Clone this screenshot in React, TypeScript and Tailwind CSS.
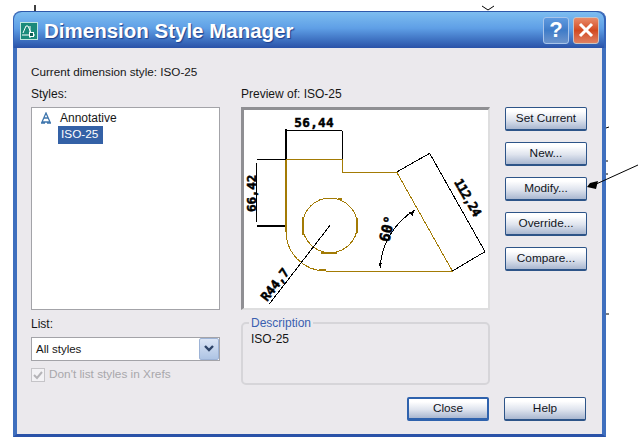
const uiFont = "font-['Liberation_Sans',Arial,sans-serif]";

const PushButton = ({ label, isDefault }: { label: string; isDefault?: boolean }) => (
  <button
    className={
      'h-[24px] w-[82px] shrink-0 rounded-[2px] bg-gradient-to-b from-white from-15% via-[#dfe4ee] via-55% to-[#a9b7d0] text-[11.8px] leading-none text-[#10141c] ' +
      (isDefault
        ? 'border-2 border-b-[3px] border-[#2f62ad]'
        : 'border border-b-2 border-[#2d5488]')
    }
  >
    {label}
  </button>
);

const TitleBar = () => (
  <div className="flex h-[37px] items-center rounded-t-[8px] border-t border-[#2e59ab] bg-gradient-to-b from-[#7dbdf0] via-[#5f9fe6] via-45% to-[#2a52a8] pl-[7px] pr-[7px] shadow-[inset_1px_0_0_#3564b8,inset_-2px_0_0_#3564b8]">
    <svg width="18" height="18" viewBox="0 0 18 18" className="mt-[2px] shrink-0">
      <rect width="18" height="18" fill="#1b8a7a" />
      <rect x="0.5" y="0.5" width="17" height="17" fill="none" stroke="#bfe8e0" />
      <path d="M3 11 L6 4 H8 L11 11 M2 13 H15 M10 4 V16" fill="none" stroke="#fff" />
      <rect x="9.5" y="10.5" width="4" height="4" fill="#0b5f54" stroke="#fff" />
    </svg>
    <span className="ml-[6px] mt-[2px] text-[20.5px] font-bold leading-none text-white [text-shadow:1px_1px_1px_#1c3f8c]">
      Dimension Style Manager
    </span>
    <div className="ml-auto flex gap-[4px]">
      <div className="flex h-[27px] w-[26px] items-center justify-center rounded-[3px] border border-[#a8c4ea] bg-gradient-to-b from-[#5f9ae0] via-[#3f7cc8] to-[#6c94cc] text-[22px] font-bold leading-none text-white">
        ?
      </div>
      <div className="flex h-[27px] w-[26px] items-center justify-center rounded-[3px] border border-[#c8c4c4] bg-gradient-to-b from-[#e98a68] via-[#d2491f] to-[#df8061]">
        <svg width="16" height="16" viewBox="0 0 16 16">
          <path d="M2 2 L14 14 M14 2 L2 14" stroke="#fff" strokeWidth="3" />
        </svg>
      </div>
    </div>
  </div>
);

const StylesList = () => (
  <div className="h-[203px] border border-[#a3a3a8] bg-white pl-[7px] pt-[2px]">
    <div className="flex h-[16px] items-center">
      <svg width="12" height="12" viewBox="0 0 12 12" className="ml-[1px] shrink-0">
        <path d="M6 1 L10 10 H2 Z M4 6 L8 6 M1 11 H5 M7 11 H11" fill="none" stroke="#3f76ad" strokeWidth="1.3" />
      </svg>
      <span className="ml-[8px] text-[12px] leading-none">Annotative</span>
    </div>
    <div className="ml-[19px] flex h-[18px] w-[45px] items-center bg-[#3461a6] pl-[3px] text-[11.8px] leading-none text-white">
      ISO-25
    </div>
  </div>
);

const PreviewDrawing = () => (
  <div className="h-[203px] w-[249px] border-[3px] border-b-[2px] border-r-[2px] border-[#8f8f93] border-b-[#dededf] border-r-[#dededf] bg-white">
    <svg width="244" height="198" viewBox="27 30 732 594" shapeRendering="crispEdges">
      <g fill="none" stroke="#a37b05" strokeWidth="3">
        <path d="M153 178 H322 V216 H485 L652 513 H272 A119 119 0 0 1 153 395 Z" />
        <path d="M153 178 V395" strokeWidth="6" />
        <circle cx="285" cy="376" r="82" />
        <path d="M252 510 H272 M310 298 H322 M367 355 V398 M205 350 V405 M258 458 H305" strokeWidth="6" />
      </g>
      <g fill="none" stroke="#000" strokeWidth="3">
        <path d="M153 92 H322 M322 92 V178 M65 178 H153 M65 190 V365" />
        <path d="M153 88 V178 M65 378 H150" strokeWidth="6" />
        <path d="M285 376 L103 612" />
        <path d="M485 216 L584 160 L750 455 L652 513" />
        <path d="M435 505 A217 217 0 0 1 540 330" />
      </g>
      <path d="M540 330 L522 338 L532 348 Z M435 505 L432 488 L440 490 Z" fill="#000" />
      <g fill="#000" stroke="#000" strokeWidth="1.5" className="font-['DejaVu_Sans_Mono',monospace] font-bold" fontSize="38">
        <text x="178" y="82" textLength="118">56,44</text>
        <text transform="translate(62 336) rotate(-90)" textLength="112">66,42</text>
        <text transform="translate(96 606) rotate(-52)" textLength="112">R44,7</text>
        <text transform="translate(462 428) rotate(-76)" fontSize="44" textLength="78" lengthAdjust="spacingAndGlyphs">60°</text>
        <text transform="translate(656 246) rotate(60)" textLength="124">112,24</text>
      </g>
    </svg>
  </div>
);

export default function App() {
  return (
    <div className={`relative h-[442px] w-[638px] overflow-hidden bg-white pl-[13px] pt-[11px] ${uiFont}`}>
      <div className="flex h-[426px] w-[593px] flex-col">
        <TitleBar />
        <div className="flex flex-1 flex-col border-x-[4px] border-b-[3px] border-l-[#3f6fbe] border-r-[#3f6fbe] border-b-[#2a52a8] bg-[#ebe9ed] pl-[14px] pr-[12px] pt-[17px] text-[#161616]">
          <div className="h-[14px] text-[11.7px] leading-[14px]">Current dimension style: ISO-25</div>
          <div className="mt-[2px] flex h-[304px]">
            <div className="flex w-[189px] flex-col pt-[6px]">
              <div className="mb-[6px] h-[14px] text-[12px] leading-[14px]">Styles:</div>
              <StylesList />
              <div className="mt-[7px] h-[14px] text-[12px] leading-[14px]">List:</div>
              <div className="mt-[6px] flex h-[24px] items-stretch border border-[#a3a3a8] bg-white">
                <span className="flex-1 pl-[4px] text-[11.5px] leading-[22px]">All styles</span>
                <div className="flex w-[20px] items-center justify-center rounded-[2px] border border-[#9db3d6] bg-gradient-to-b from-[#dbe5f5] to-[#aec4e4]">
                  <svg width="10" height="8" viewBox="0 0 10 8">
                    <path d="M1 1 L5 5 L9 1" fill="none" stroke="#2e4468" strokeWidth="2.4" />
                  </svg>
                </div>
              </div>
              <div className="mt-[7px] flex h-[14px] items-center text-[11.8px] leading-none text-[#a8a7ab]">
                <div className="flex h-[14px] w-[14px] items-center justify-center border border-[#c5c4c8] bg-[#f3f2f5]">
                  <svg width="10" height="10" viewBox="0 0 10 10">
                    <path d="M1 5 L4 8 L9 2" fill="none" stroke="#b5b4b8" strokeWidth="2" />
                  </svg>
                </div>
                <span className="ml-[4px]">Don't list styles in Xrefs</span>
              </div>
            </div>
            <div className="ml-[21px] flex w-[249px] flex-col pt-[6px]">
              <div className="mb-[6px] h-[14px] text-[12px] leading-[14px]">Preview of: ISO-25</div>
              <PreviewDrawing />
              <fieldset className="mt-[6px] h-[69px] shrink-0 rounded-[5px] border-2 border-[#d6d5d9] pl-[6px]">
                <legend className="px-[2px] text-[12px] leading-[14px] text-[#3a5fb0]">Description</legend>
                <div className="mt-[2px] pl-[2px] text-[12px] leading-[14px]">ISO-25</div>
              </fieldset>
            </div>
            <div className="ml-[15px] flex flex-col gap-[11px] pt-[26px]">
              <PushButton label="Set Current" />
              <PushButton label="New..." />
              <PushButton label="Modify..." />
              <PushButton label="Override..." />
              <PushButton label="Compare..." />
            </div>
          </div>
          <div className="mt-[12px] flex justify-end gap-[15px] pr-[4px]">
            <PushButton label="Close" isDefault />
            <PushButton label="Help" />
          </div>
        </div>
      </div>
      {/* stray bits of the drawing behind the dialog, and the callout arrow */}
      <svg width="638" height="442" viewBox="0 0 638 442" className="pointer-events-none absolute left-0 top-0">
        <path d="M35 5 V11" stroke="#000" strokeWidth="1.5" />
        <path d="M482 6 L488 10 L494 6" fill="none" stroke="#000" />
        <path d="M606 128 L609 127 M606 161 H608 M606 174 H608 M606 314 H609" stroke="#000" />
        <path d="M638 165 L594 185" stroke="#000" />
        <path d="M587 187 L590 183 L596 189 Z M590 183 L598 181 L596 189 Z" fill="#000" />
      </svg>
    </div>
  );
}
